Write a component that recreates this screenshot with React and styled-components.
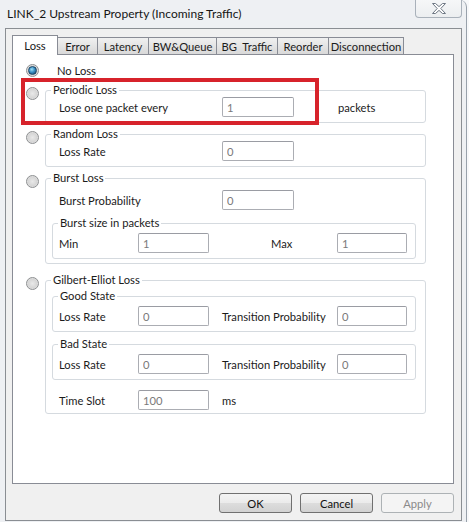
import React from 'react'
import styled, { createGlobalStyle } from 'styled-components'

const GlobalStyle = createGlobalStyle`
  html, body { margin: 0; padding: 0; background: #f7f8fa; }
  body {
    font-family: Lato, "Open Sans", sans-serif;
    font-size: 11.2px;
    color: #1b1b1b;
  }
  * { box-sizing: border-box; }
`

const tabs = [
  { label: 'Loss', w: 46, active: true },
  { label: 'Error', w: 41 },
  { label: 'Latency', w: 52 },
  { label: 'BW&Queue', w: 69 },
  { label: 'BG  Traffic', w: 62 },
  { label: 'Reorder', w: 52 },
  { label: 'Disconnection', w: 76 }
]

function CloseGlyph(){
  return (
    <svg width="14" height="11" viewBox="0 0 14 11">
      <polygon
        points="0.5,0.5 3.5,0.5 7,3.6 10.5,0.5 13.5,0.5 8.8,5.5 13.5,10.5 10.5,10.5 7,7.4 3.5,10.5 0.5,10.5 5.2,5.5"
        fill="#fdfdfd"
        stroke="#6f7884"
        strokeWidth="1"
        strokeLinejoin="round"
      />
    </svg>
  )
}

function Option({checked, mt, children}){
  return (
    <OptionRow $mt={mt}>
      <Radio $checked={checked} />
      {children}
    </OptionRow>
  )
}

function Box({title, mt, children}){
  return (
    <GroupBox $mt={mt}>
      <Legend>{title}</Legend>
      {children}
    </GroupBox>
  )
}

export default function App(){
  return (
    <>
      <GlobalStyle />
      <Window>
        <TitleBar>
          <Title>LINK_2 Upstream Property (Incoming Traffic)</Title>
          <CloseButton><CloseGlyph /></CloseButton>
        </TitleBar>

        <Client>
          <TabStrip>
            {tabs.map(t => (
              <Tab key={t.label} $w={t.w} $active={t.active}>{t.label}</Tab>
            ))}
          </TabStrip>

          <Panel>
            <PlainOption>
              <Radio $checked />
              <Caption>No Loss</Caption>
            </PlainOption>

            <Option mt={6}>
              <Box title="Periodic Loss">
                <GroupBody $pt={0} $pb={5}>
                  <Row $indent={7}>
                    <Label $w={163}>Lose one packet every</Label>
                    <TextBox $w={72} readOnly value="1" />
                    <Label $ml={44}>packets</Label>
                  </Row>
                </GroupBody>
              </Box>
            </Option>

            <Option mt={4}>
              <Box title="Random Loss">
                <GroupBody $pt={0} $pb={5}>
                  <Row $indent={7}>
                    <Label $w={163}>Loss Rate</Label>
                    <TextBox $w={72} readOnly value="0" />
                  </Row>
                </GroupBody>
              </Box>
            </Option>

            <Option mt={4}>
              <Box title="Burst Loss">
                <GroupBody $pt={5} $pb={4}>
                  <Row $indent={7}>
                    <Label $w={163}>Burst Probability</Label>
                    <TextBox $w={72} readOnly value="0" />
                  </Row>
                  <Box title="Burst size in packets" mt={6}>
                    <GroupBody $pt={3} $pb={5}>
                      <Row>
                        <Label $w={79}>Min</Label>
                        <TextBox $w={71} readOnly value="1" />
                        <Label $ml={62} $w={66}>Max</Label>
                        <TextBox $w={70} readOnly value="1" />
                      </Row>
                    </GroupBody>
                  </Box>
                </GroupBody>
              </Box>
            </Option>

            <Option mt={9}>
              <Box title="Gilbert-Elliot Loss">
                <GroupBody $pt={2} $pb={3}>
                  <Box title="Good State">
                    <GroupBody $pt={3} $pb={5}>
                      <Row>
                        <Label $w={79}>Loss Rate</Label>
                        <TextBox $w={71} readOnly value="0" />
                        <Label $ml={13} $w={115}>Transition Probability</Label>
                        <TextBox $w={70} readOnly value="0" />
                      </Row>
                    </GroupBody>
                  </Box>
                  <Box title="Bad State" mt={5}>
                    <GroupBody $pt={3} $pb={5}>
                      <Row>
                        <Label $w={79}>Loss Rate</Label>
                        <TextBox $w={71} readOnly value="0" />
                        <Label $ml={13} $w={115}>Transition Probability</Label>
                        <TextBox $w={70} readOnly value="0" />
                      </Row>
                    </GroupBody>
                  </Box>
                  <Row $indent={7} $mt={10}>
                    <Label $w={79}>Time Slot</Label>
                    <TextBox $w={71} readOnly value="100" />
                    <Label $ml={13}>ms</Label>
                  </Row>
                </GroupBody>
              </Box>
            </Option>

            <Highlight />
          </Panel>

          <ButtonRow>
            <Button>OK</Button>
            <Button>Cancel</Button>
            <Button disabled>Apply</Button>
          </ButtonRow>
        </Client>
      </Window>
    </>
  )
}

const Window = styled.div`
  width: 467px;
  height: 522px;
  display: flex;
  flex-direction: column;
  padding: 0 4px 1px 5px;
  background: #eef0f3;
  border-right: 1px solid #98a1ab;
  border-top-right-radius: 7px;
`

const TitleBar = styled.div`
  height: 28px;
  flex: none;
  display: flex;
  justify-content: space-between;
  align-items: flex-start;
`

const Title = styled.div`
  padding-left: 2px;
  line-height: 28px;
  font-size: 12px;
  color: #151515;
`

const CloseButton = styled.div`
  width: 47px;
  height: 18px;
  display: flex;
  align-items: center;
  justify-content: center;
  background: linear-gradient(#f6f7f8, #eceef0);
  border: 1px solid #a9b1ba;
  border-top: none;
  border-radius: 0 0 4px 4px;
`

const Client = styled.div`
  flex: 1;
  display: flex;
  flex-direction: column;
  padding: 6px 7px 7px 6px;
  background: #f0f0f0;
  border: 1px solid #8a8e93;
`

const TabStrip = styled.div`
  height: 20px;
  flex: none;
  display: flex;
  align-items: flex-end;
  margin-bottom: -1px;
  position: relative;
  z-index: 1;
`

const Tab = styled.div`
  width: ${p => p.$w}px;
  height: ${p => p.$active ? 20 : 18}px;
  display: flex;
  align-items: center;
  justify-content: center;
  padding-bottom: ${p => p.$active ? 1 : 0}px;
  border: 1px solid #898c95;
  border-bottom: ${p => p.$active ? 'none' : '1px solid #898c95'};
  background: ${p => p.$active ? '#fff' : 'linear-gradient(#f0f0f0, #e4e4e4 50%, #d9d9d9 100%)'};
  color: #1b1b1b;
  white-space: pre;
  position: relative;
  z-index: ${p => p.$active ? 2 : 1};

  & + & {
    margin-left: -1px;
  }
`

const Panel = styled.div`
  flex: 1;
  position: relative;
  padding: 9px 27px 0 13px;
  background: #fff;
  border: 1px solid #898c95;
`

const PlainOption = styled.div`
  display: flex;
  align-items: center;
  height: 13px;
`

const Caption = styled.span`
  margin-left: 12px;
`

const OptionRow = styled.div`
  display: flex;
  align-items: flex-start;
  margin-top: ${p => p.$mt}px;
`

const Radio = styled.span`
  width: 13px;
  height: 13px;
  flex: none;
  margin-top: ${p => p.$checked ? 0 : 4}px;
  margin-right: 6px;
  border-radius: 50%;
  border: 1px solid #8d8f91;
  background: radial-gradient(circle at 50% 50%, #e9e9e9 0, #d6d6d6 55%, #f4f4f4 100%);
  display: flex;
  align-items: center;
  justify-content: center;

  &::after {
    content: '';
    display: ${p => p.$checked ? 'block' : 'none'};
    width: 7px;
    height: 7px;
    border-radius: 50%;
    border: 1px solid #1a4566;
    background: radial-gradient(circle at 40% 35%, #9fe0f7 0, #3a8fc4 45%, #0f3d63 100%);
  }
`

const GroupBox = styled.fieldset`
  flex: 1;
  min-width: 0;
  margin: ${p => p.$mt || 0}px 0 0;
  padding: 0;
  border: 1px solid #d5dadf;
  border-radius: 3px;
`

const Legend = styled.legend`
  margin-left: 5px;
  padding: 0 2px;
  line-height: 14px;
  color: #1b1b1b;
`

const GroupBody = styled.div`
  padding: ${p => p.$pt}px 9px ${p => p.$pb}px 6px;
`

const Row = styled.div`
  display: flex;
  align-items: center;
  height: 20px;
  padding-left: ${p => p.$indent || 0}px;
  margin-top: ${p => p.$mt || 0}px;
`

const Label = styled.span`
  flex: none;
  width: ${p => p.$w ? `${p.$w}px` : 'auto'};
  margin-left: ${p => p.$ml || 0}px;
  white-space: nowrap;
`

const TextBox = styled.input`
  width: ${p => p.$w}px;
  height: 20px;
  flex: none;
  margin: 0;
  padding: 0 0 0 4px;
  border: 1px solid #abadb3;
  border-top-color: #9a9ca3;
  border-radius: 2px;
  background: #fff;
  font: inherit;
  color: #7a7a7a;
  outline: none;
`

const Highlight = styled.div`
  position: absolute;
  left: 8px;
  top: 23px;
  width: 298px;
  height: 47px;
  border: 4px solid #d7232b;
  pointer-events: none;
`

const ButtonRow = styled.div`
  height: 20px;
  flex: none;
  margin-top: 9px;
  display: flex;
  justify-content: flex-end;
  gap: 8px;
`

const Button = styled.button`
  width: 73px;
  height: 20px;
  margin: 0;
  padding: 0;
  font: inherit;
  color: #111;
  border: 1px solid #707070;
  border-radius: 3px;
  background: linear-gradient(#f3f3f3 0%, #ebebeb 50%, #dddddd 50%, #d2d2d2 100%);

  &:disabled {
    color: #8a8a8a;
    border-color: #adb2b5;
    background: #f4f4f4;
  }
`
